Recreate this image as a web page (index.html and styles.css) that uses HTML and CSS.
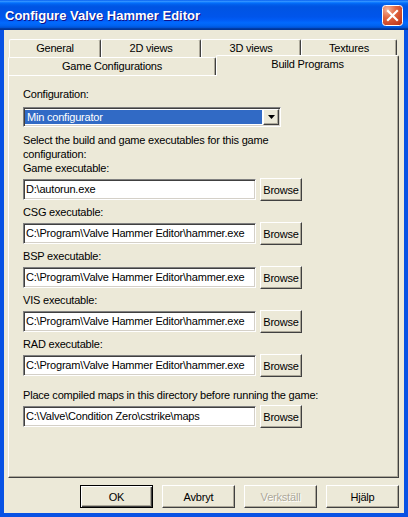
FILE: index.html
```html
<!DOCTYPE html>
<html lang="en">
<head>
  <meta charset="UTF-8" />
  <title>Configure Valve Hammer Editor</title>
  <link rel="stylesheet" href="styles.css">
</head>
<body>

  <div class="window">
    <div class="titlebar">
      <span class="title">Configure Valve Hammer Editor</span>
      <button class="close" aria-label="Close">
        <svg width="21" height="21" viewBox="0 0 21 21">
          <defs>
            <radialGradient id="closeFill" cx="0.25" cy="0.2" r="0.95">
              <stop offset="0" stop-color="#F4B49C"/>
              <stop offset="0.45" stop-color="#E2653F"/>
              <stop offset="1" stop-color="#C0361A"/>
            </radialGradient>
          </defs>
          <rect x="0.5" y="0.5" width="20" height="20" rx="3" fill="url(#closeFill)" stroke="#fff"/>
          <path d="M6 6 L15 15 M15 6 L6 15" stroke="#fff" stroke-width="2.2" stroke-linecap="square"/>
        </svg>
      </button>
    </div>

    <div class="client">
      <div class="tab-row">
        <div class="tab tab-general">General</div>
        <div class="tab tab-2d">2D views</div>
        <div class="tab tab-3d">3D views</div>
        <div class="tab tab-textures">Textures</div>
      </div>
      <div class="tab-row front">
        <div class="tab tab-games">Game Configurations</div>
        <div class="tab tab-build selected">Build Programs</div>
      </div>

      <div class="panel">
        <div class="label">Configuration:</div>
        <div class="combo">
          <span class="combo-value">Min configurator</span>
          <span class="combo-arrow">
            <svg width="7" height="4" viewBox="0 0 7 4"><polygon points="0,0 7,0 3.5,4" fill="#000"/></svg>
          </span>
        </div>

        <p class="intro">Select the build and game executables for this game configuration:</p>

        <div class="fields">
          <div class="field">
            <div class="label">Game executable:</div>
            <div class="path-row">
              <div class="path">D:\autorun.exe</div>
              <button class="btn browse">Browse</button>
            </div>
          </div>
          <div class="field">
            <div class="label">CSG executable:</div>
            <div class="path-row">
              <div class="path">C:\Program\Valve Hammer Editor\hammer.exe</div>
              <button class="btn browse">Browse</button>
            </div>
          </div>
          <div class="field">
            <div class="label">BSP executable:</div>
            <div class="path-row">
              <div class="path">C:\Program\Valve Hammer Editor\hammer.exe</div>
              <button class="btn browse">Browse</button>
            </div>
          </div>
          <div class="field">
            <div class="label">VIS executable:</div>
            <div class="path-row">
              <div class="path">C:\Program\Valve Hammer Editor\hammer.exe</div>
              <button class="btn browse">Browse</button>
            </div>
          </div>
          <div class="field">
            <div class="label">RAD executable:</div>
            <div class="path-row">
              <div class="path">C:\Program\Valve Hammer Editor\hammer.exe</div>
              <button class="btn browse">Browse</button>
            </div>
          </div>
          <div class="field spaced">
            <div class="label">Place compiled maps in this directory before running the game:</div>
            <div class="path-row">
              <div class="path">C:\Valve\Condition Zero\cstrike\maps</div>
              <button class="btn browse">Browse</button>
            </div>
          </div>
        </div>
      </div>

      <div class="actions">
        <button class="btn action default">OK</button>
        <button class="btn action">Avbryt</button>
        <button class="btn action disabled">Verkställ</button>
        <button class="btn action">Hjälp</button>
      </div>
    </div>
  </div>

</body>
</html>
```

FILE: styles.css
```css
body {
  margin: 0;
  font-family: "Liberation Sans", Arial, sans-serif;
  font-size: 11px;
  letter-spacing: -0.2px;
  color: #000;
}

.window {
  width: 408px;
  height: 517px;
  box-sizing: border-box;
  display: flex;
  flex-direction: column;
  background: #0852E4;
}

/* title bar */
.titlebar {
  height: 30px;
  flex-shrink: 0;
  display: flex;
  align-items: center;
  justify-content: space-between;
  padding: 0 5px;
  background: linear-gradient(to bottom, #0058EE 0%, #3593FF 4%, #288EFF 6%, #127DFF 8%, #036FFC 10%, #0262EE 14%, #0057E5 20%, #0054E3 24%, #0055EB 56%, #005BF5 66%, #026AFE 76%, #0062EF 86%, #0052D6 92%, #0040AB 94%, #003092 100%);
}

.title {
  color: white;
  font-weight: bold;
  font-size: 13px;
  letter-spacing: 0;
  text-shadow: 1px 1px #0F1089;
  padding-top: 1px;
}

.close {
  width: 21px;
  height: 21px;
  padding: 0;
  border: none;
  background: none;
  display: block;
}

.close svg {
  display: block;
}

/* dialog body */
.client {
  flex: 1;
  margin: 0 4px 4px;
  padding: 9px 5px 5px 4px;
  background: #ECE9D8;
  display: flex;
  flex-direction: column;
}

.tab-row {
  display: flex;
  padding-left: 1px;
}

.tab-row.front {
  padding-left: 0;
  align-items: flex-end;
}

.tab {
  box-sizing: border-box;
  height: 18px;
  padding-top: 2px;
  line-height: 13px;
  text-align: center;
  background: #ECE9D8;
  border-top: 1px solid #fff;
  border-left: 1px solid #fff;
  border-right: 1px solid #404040;
  box-shadow: inset -1px 0 #ACA899;
  border-radius: 2px 2px 0 0;
  white-space: nowrap;
}

.tab-general { width: 92px; }
.tab-2d { width: 100px; }
.tab-3d { width: 100px; }
.tab-textures { width: 96px; }
.tab-games { width: 208px; }
.tab-build { width: 183px; }

.tab.selected {
  position: relative;
  z-index: 1;
  height: 21px;
  margin-top: -2px;
  margin-bottom: -1px;
}

.panel {
  flex: 1;
  box-sizing: border-box;
  padding: 12px 0 0 14px;
  border: 1px solid;
  border-color: #fff #404040 #404040 #fff;
  box-shadow: inset -1px -1px #ACA899;
}

.label {
  line-height: 13px;
  white-space: nowrap;
}

/* combo box */
.combo {
  box-sizing: border-box;
  width: 258px;
  height: 20px;
  margin-top: 6px;
  display: flex;
  background: #fff;
  border: 1px solid;
  border-color: #808080 #fff #fff #808080;
  box-shadow: inset 1px 1px #404040, inset -1px -1px #D4D0C8;
  padding: 1px;
}

.combo-value {
  flex: 1;
  margin: 1px 1px 1px 0;
  padding-left: 2px;
  background: #316AC5;
  color: #fff;
  line-height: 14px;
}

.combo-arrow {
  box-sizing: border-box;
  width: 16px;
  height: 16px;
  display: flex;
  align-items: center;
  justify-content: center;
  background: #ECE9D8;
  border: 1px solid;
  border-color: #fff #404040 #404040 #fff;
  box-shadow: inset -1px -1px #ACA899;
}

.combo-arrow svg {
  display: block;
}

.intro {
  width: 270px;
  margin: 6px 0 1px;
  line-height: 14px;
}

/* path fields */
.fields {
  display: flex;
  flex-direction: column;
  gap: 5px;
}

.field.spaced {
  margin-top: 7px;
}

.path-row {
  display: flex;
  align-items: center;
  margin-top: 3px;
}

.path {
  box-sizing: border-box;
  width: 233px;
  height: 21px;
  padding: 3px 0 0 2px;
  line-height: 13px;
  background: #fff;
  border: 1px solid;
  border-color: #808080 #fff #fff #808080;
  box-shadow: inset 1px 1px #404040, inset -1px -1px #D4D0C8;
  white-space: nowrap;
  overflow: hidden;
}

.btn {
  box-sizing: border-box;
  font-family: inherit;
  font-size: 11px;
  letter-spacing: -0.2px;
  color: #000;
  background: #ECE9D8;
  border: 1px solid;
  border-color: #fff #404040 #404040 #fff;
  box-shadow: inset -1px -1px #ACA899;
  padding: 0;
  border-radius: 0;
}

.browse {
  width: 42px;
  height: 23px;
  margin-left: 4px;
}

/* bottom buttons */
.actions {
  display: flex;
  justify-content: flex-end;
  gap: 9px;
  margin-top: 7px;
}

.action {
  width: 73px;
  height: 23px;
}

.action.default {
  border: 1px solid #000;
  box-shadow: inset 1px 1px #fff, inset -1px -1px #404040, inset -2px -2px #ACA899;
}

.action.disabled {
  color: #ACA899;
  text-shadow: 1px 1px #fff;
}
```
